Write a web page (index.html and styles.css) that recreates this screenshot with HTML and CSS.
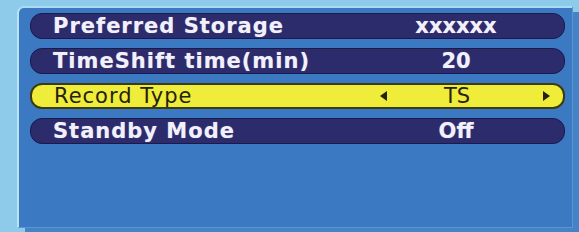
FILE: index.html
```html
<!DOCTYPE html>
<html lang="en">
<head>
    <meta charset="UTF-8">
    <meta name="viewport" content="width=device-width, initial-scale=1.0">
    <title>Record Settings</title>
    <link rel="stylesheet" href="styles.css">
</head>
<body>
    <div class="panel">
        <div class="row">
            <span class="label">Preferred Storage</span>
            <span class="value">xxxxxx</span>
        </div>
        <div class="row">
            <span class="label">TimeShift time(min)</span>
            <span class="value">20</span>
        </div>
        <div class="row active">
            <span class="label">Record Type</span>
            <span class="arrow left"></span>
            <span class="value">TS</span>
            <span class="arrow right"></span>
        </div>
        <div class="row">
            <span class="label">Standby Mode</span>
            <span class="value">Off</span>
        </div>
    </div>
</body>
</html>
```

FILE: styles.css
```css
body {
    margin: 0;
    padding: 6px 0 0 17px;
    background: #8ecbeb;
    font-family: "DejaVu Sans", "Liberation Sans", sans-serif;
    height: 232px;
    box-sizing: border-box;
    overflow: hidden;
}

.panel {
    width: 556px;
    height: 222px;
    box-sizing: border-box;
    background: #3b79c2;
    border-left: 2px solid #b9e4f6;
    border-top: 2px solid #a9dcf2;
    border-right: 1px solid #5a96d2;
    border-bottom: 1px solid #5a96d2;
    border-radius: 7px 0 0 0;
    box-shadow: 8px 6px 0 #4682c6;
    padding: 5px 0 0 11px;
    display: flex;
    flex-direction: column;
    gap: 9px;
}

.row {
    width: 535px;
    height: 26px;
    box-sizing: border-box;
    display: flex;
    align-items: center;
    padding-left: 22px;
    background: #2c2b6c;
    border: 1px solid #1b1a4c;
    border-radius: 12px;
    color: #f2f0fa;
    font-size: 21px;
    font-weight: bold;
    text-shadow: 0 0 1px rgba(255, 255, 255, 0.4);
}

.label {
    flex: 0 0 326px;
    letter-spacing: 1px;
}

.value {
    flex: 0 0 134px;
    text-align: center;
    margin-left: 10px;
}

.active {
    background: #efec3a;
    border: 2px solid #3c3a0e;
    color: #24220c;
    font-weight: normal;
    text-shadow: none;
}

.active .value {
    margin-left: 0;
}

.arrow {
    width: 0;
    height: 0;
    border-top: 5px solid transparent;
    border-bottom: 5px solid transparent;
}

.arrow.left {
    flex: 0 0 auto;
    border-right: 7px solid #24220c;
    margin-right: 3px;
}

.arrow.right {
    flex: 0 0 auto;
    border-left: 7px solid #24220c;
    margin-left: 19px;
}
```
